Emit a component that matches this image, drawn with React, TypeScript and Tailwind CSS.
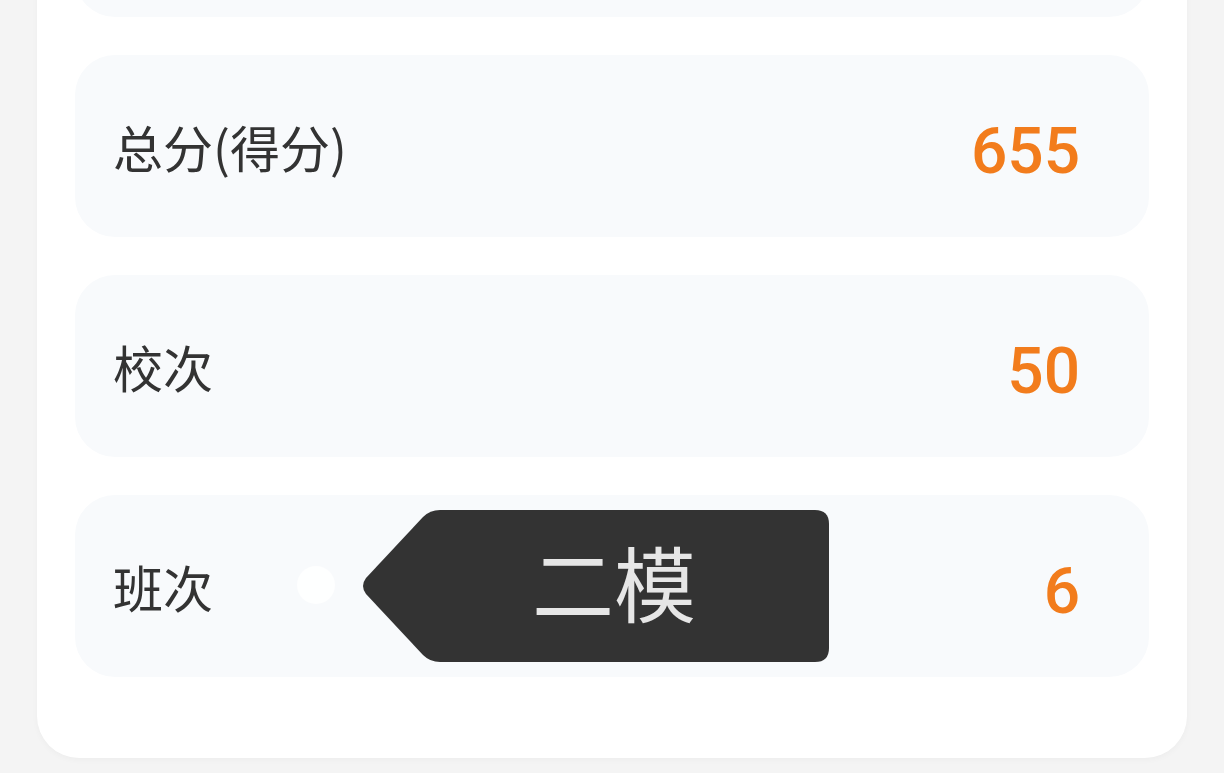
const rows = [
  { label: "", value: "" },
  { label: "总分(得分)", value: "655" },
  { label: "校次", value: "50" },
  { label: "班次", value: "6" },
];

export default function App() {
  return (
    <div className="h-[773px] overflow-hidden bg-[#f4f4f4] px-[37px] font-['Noto_Sans_CJK_SC',sans-serif]">
      <div className="-mt-[165px] flex flex-col gap-[38px] rounded-b-[42px] bg-white px-[38px] pb-[81px] shadow-[0_2px_6px_rgba(0,0,0,0.03)]">
        {rows.map((r, i) => (
          <ScoreRow key={i} label={r.label} value={r.value} tip={i === 3} />
        ))}
      </div>
    </div>
  );
}

function ScoreRow({
  label,
  value,
  tip,
}: {
  label: string;
  value: string;
  tip?: boolean;
}) {
  return (
    <div className="relative flex h-[182px] items-center justify-between rounded-[40px] bg-[#f8fafc] pl-[38px] pr-[69px]">
      <div className="text-[50px] leading-none text-[#333333]">{label}</div>
      <div className="pt-[12px] font-['Roboto',sans-serif] text-[64px] font-medium leading-none text-[#f27c1c]">
        {value}
      </div>
      {tip && <Tooltip />}
    </div>
  );
}

function Tooltip() {
  return (
    <>
      <div className="absolute left-[222px] top-[71px] size-[38px] rounded-full bg-white/90" />
      <div className="absolute left-[285px] top-[15px] h-[152px] w-[469px]">
        <svg width="469" height="152" viewBox="0 0 469 152" className="absolute inset-0">
          <path
            d="M80 0 H455 Q469 0 469 14 V138 Q469 152 455 152 H80 Q70 152 63 145 L6 84 Q0 76 6 68 L63 7 Q70 0 80 0 Z"
            fill="#333333"
          />
        </svg>
        <div className="relative flex h-full items-center pb-[10px] pl-[172px] text-[82px] leading-none text-[#e6e6e6]">
          二模
        </div>
      </div>
    </>
  );
}
